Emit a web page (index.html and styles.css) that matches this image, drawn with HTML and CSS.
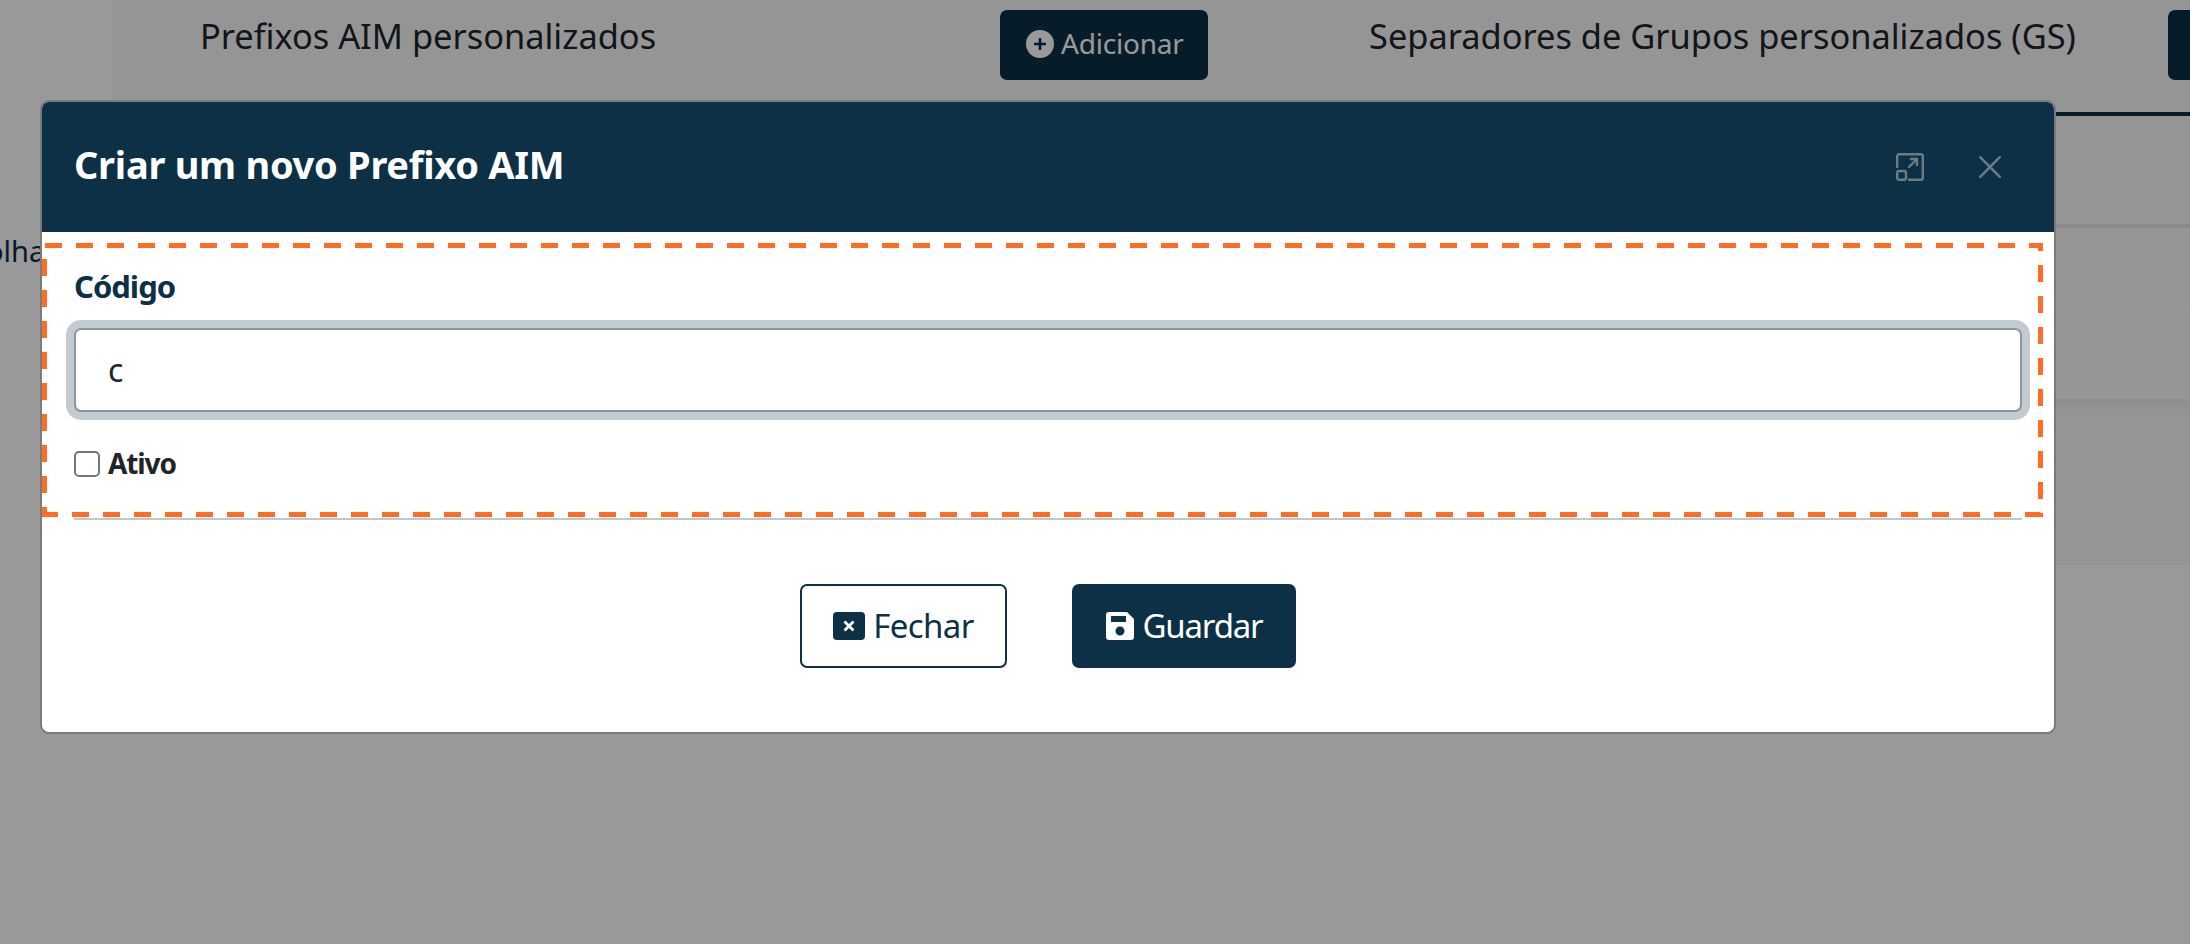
FILE: index.html
```html
<!DOCTYPE html>
<html lang="pt">
<head>
  <meta charset="UTF-8" />
  <title>Criar um novo Prefixo AIM</title>
  <link rel="stylesheet" href="styles.css">
</head>
<body>

  <div class="page">
    <div class="sidebar"><span class="side-text">Folha</span></div>
    <div class="main">
      <div class="col col-aim">
        <h2>Prefixos AIM personalizados</h2>
        <button class="add-btn">
          <svg class="add-icon" viewBox="0 0 28 28"><circle cx="14" cy="14" r="14" fill="#fff"/><path d="M14 8v12M8 14h12" stroke="#0c3045" stroke-width="2.6"/></svg>
          Adicionar
        </button>
      </div>
      <div class="col col-gs">
        <h2>Separadores de Grupos personalizados (GS)</h2>
        <button class="add-btn add-cut"></button>
        <div class="table">
          <div class="row row-one"></div>
          <div class="row row-two"></div>
          <div class="row row-three"></div>
        </div>
      </div>
    </div>
  </div>

  <div class="backdrop">
    <div class="modal">
      <div class="modal-header">
        <h1>Criar um novo Prefixo AIM</h1>
        <svg class="expand-icon" viewBox="0 0 28 28" fill="none" stroke="#6d7b85" stroke-width="2.4" stroke-linecap="round" stroke-linejoin="round">
          <path d="M1.200 14V3.200a2 2 0 0 1 2-2h21.600a2 2 0 0 1 2 2v21.600a2 2 0 0 1-2 2H13"/>
          <rect x="1.200" y="18" width="8.800" height="8.800" rx="2"/>
          <path d="M13 14l8-8M15 6h6v6"/>
        </svg>
        <svg class="close-icon" viewBox="0 0 22 22" fill="none" stroke="#6d7b85" stroke-width="2.400" stroke-linecap="round">
          <path d="M1.200 1.200l19.600 19.600M20.800 1.200L1.200 20.800"/>
        </svg>
      </div>
      <div class="modal-body">
        <label class="field-label" for="codigo">Código</label>
        <input class="field-input" id="codigo" type="text" value="c">
        <div class="check-row">
          <input class="check-box" id="ativo" type="checkbox">
          <label class="check-label" for="ativo">Ativo</label>
        </div>
      </div>
      <div class="modal-footer">
        <button class="btn btn-outline">
          <svg class="btn-icon" viewBox="0 0 32 28"><rect width="32" height="28" rx="4" fill="#0c3045"/><path d="M11.500 9.500l9 9M20.500 9.500l-9 9" stroke="#fff" stroke-width="2.800"/></svg>
          Fechar
        </button>
        <button class="btn btn-solid">
          <svg class="btn-icon" viewBox="0 0 28 28"><path fill="#fff" fill-rule="evenodd" d="M3 0h18l7 7v18a3 3 0 0 1-3 3H3a3 3 0 0 1-3-3V3a3 3 0 0 1 3-3zM5 4v6h15V4zM14 14.500a4.500 4.500 0 1 0 0 9 4.500 4.500 0 0 0 0-9z"/></svg>
          Guardar
        </button>
      </div>
    </div>
  </div>

  <!-- highlight drawn over the form -->
  <svg class="highlight" viewBox="0 0 2190 944" fill="none" stroke="#ff6d24" stroke-width="5" stroke-dasharray="17 14">
    <path d="M45 245.500H2040.500V514.500H42"/>
    <path d="M44.500 517V250" stroke-dashoffset="7"/>
  </svg>

</body>
</html>
```

FILE: styles.css
```css
* {
  box-sizing: border-box;
}
html, body {
  margin: 0;
  height: 100%;
  overflow: hidden;
}
body {
  position: relative;
  background: #fff;
  font-family: 'Noto Sans', sans-serif;
  color: #212529;
}
.page {
  display: flex;
  height: 565px;
}
.sidebar {
  width: 112px;
  overflow: hidden;
  flex-shrink: 0;
  padding-top: 231px;
}
.side-text {
  display: block;
  margin-left: -29px;
  font-size: 29px;
  line-height: 40px;
  color: #0c3045;
}
.main {
  flex: 1;
  display: flex;
  background: #f8f9fa;
  overflow: hidden;
}
.col {
  display: flex;
  flex-wrap: wrap;
  align-items: flex-start;
  align-content: flex-start;
  padding-top: 10px;
}
.col-aim {
  width: 1176px;
  padding-left: 88px;
  flex-shrink: 0;
}
.col-aim h2 {
  width: 800px;
}
.col-gs {
  flex: 1;
  padding-left: 81px;
  min-width: 0;
  flex-wrap: nowrap;
  position: relative;
}
.col-gs h2 {
  width: 799px;
  flex-shrink: 0;
}
h2 {
  margin: -1px 0 0;
  font-size: 34.4px;
  font-weight: 400;
  line-height: 54px;
  color: #212529;
}
.add-btn {
  display: flex;
  align-items: center;
  gap: 7px;
  height: 70px;
  width: 208px;
  padding: 0 0 4px 26px;
  border: none;
  border-radius: 7px;
  background: #0c3045;
  color: #fff;
  font-family: inherit;
  font-size: 28px;
  letter-spacing: -0.2px;
  white-space: nowrap;
  flex-shrink: 0;
}
.add-icon {
  width: 28px;
  height: 28px;
  flex-shrink: 0;
  margin-top: 2px;
}
.table {
  position: absolute;
  left: 0;
  right: 0;
  top: 112px;
  border-top: 4px solid #0c3045;
  box-shadow: 0 8px 14px rgba(0, 0, 0, 0.06);
}
.row-one {
  height: 112px;
  border-bottom: 4px solid #e6e7e8;
}
.row-two {
  height: 86px;
  border-bottom: 6px solid #fbfbfb;
}
.row-three {
  height: 85px;
  border-bottom: 6px solid #fbfbfb;
}
.backdrop {
  position: absolute;
  top: 0;
  left: 0;
  right: 0;
  bottom: 0;
  background: rgba(0, 0, 0, 0.4);
  padding: 100px 134px 0 40px;
}
.modal {
  background: #fff;
  border: 2px solid #7b7b7b;
  border-radius: 9px;
  height: 634px;
  overflow: hidden;
}
.modal-header {
  display: flex;
  align-items: center;
  height: 130px;
  padding: 0 53px 0 32px;
  background: #0c3045;
}
.modal-header h1 {
  flex: 1;
  margin: 0 0 6px;
  font-size: 38px;
  font-weight: 700;
  letter-spacing: -0.28px;
  color: #fff;
}
.expand-icon {
  width: 28px;
  height: 28px;
  margin-right: 55px;
}
.close-icon {
  width: 22px;
  height: 22px;
}
.modal-body {
  margin: 0 32px;
  padding: 32px 0 36px;
  border-bottom: 2px solid #c6c6c6;
}
.field-label {
  display: block;
  margin-bottom: 20px;
  font-size: 31px;
  font-weight: 700;
  line-height: 44px;
  letter-spacing: -1px;
  color: #0c3045;
}
.field-input {
  display: block;
  width: 100%;
  height: 84px;
  padding: 0 32px 2px;
  border: 2px solid #86989f;
  border-radius: 7px;
  box-shadow: 0 0 0 8px #c2cbd2;
  outline: none;
  font-family: inherit;
  font-size: 32px;
  color: #212529;
}
.check-row {
  display: flex;
  align-items: center;
  gap: 8px;
  height: 36px;
  margin-top: 34px;
}
.check-box {
  appearance: none;
  width: 26px;
  height: 26px;
  margin: 0;
  border: 2px solid #767676;
  border-radius: 5px;
  background: #fff;
}
.check-label {
  margin-top: -2px;
  font-size: 28px;
  font-weight: 700;
  letter-spacing: -1.1px;
  color: #212529;
}
.modal-footer {
  display: flex;
  justify-content: center;
  gap: 65px;
  padding-top: 64px;
}
.btn {
  display: flex;
  align-items: center;
  justify-content: center;
  height: 84px;
  padding-bottom: 2px;
  border-radius: 7px;
  font-family: inherit;
  font-size: 33px;
}
.btn-outline {
  gap: 8px;
  width: 207px;
  border: 2px solid #0c3045;
  background: #fff;
  color: #0c3045;
  letter-spacing: -0.6px;
}
.btn-solid {
  gap: 9px;
  width: 224px;
  border: 2px solid #0c3045;
  background: #0c3045;
  color: #fff;
  letter-spacing: -1.2px;
}
.btn-outline .btn-icon {
  width: 32px;
  height: 28px;
}
.btn-solid .btn-icon {
  width: 28px;
  height: 28px;
}
.highlight {
  position: absolute;
  top: 0;
  left: 0;
  width: 2190px;
  height: 944px;
  pointer-events: none;
}
```
